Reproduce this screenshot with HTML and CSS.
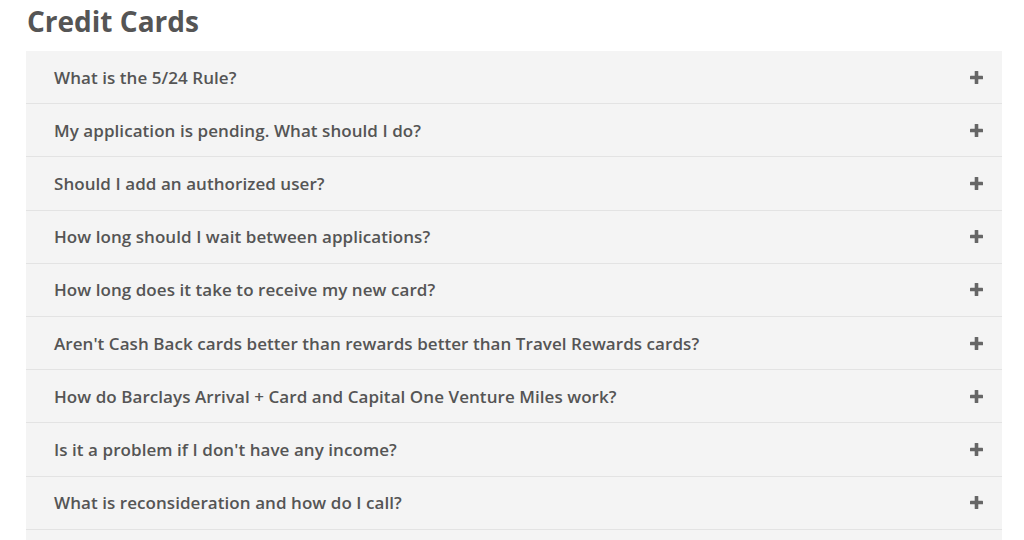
FILE: index.html
```html
<!DOCTYPE html>
<html lang="en">
<head>
<meta charset="utf-8">
<title>Credit Cards FAQ</title>
<link rel="stylesheet" href="styles.css">
</head>
<body>
<main class="page">
  <h1 class="title">Credit Cards</h1>
  <div class="faq">
    <div class="item"><span class="q">What is the 5/24 Rule?</span><svg class="plus" viewBox="0 0 13 13"><rect x="4.7" y="0" width="3.6" height="13" rx="0.6"/><rect x="0" y="4.7" width="13" height="3.6" rx="0.6"/></svg></div>
    <div class="item"><span class="q">My application is pending. What should I do?</span><svg class="plus" viewBox="0 0 13 13"><rect x="4.7" y="0" width="3.6" height="13" rx="0.6"/><rect x="0" y="4.7" width="13" height="3.6" rx="0.6"/></svg></div>
    <div class="item"><span class="q">Should I add an authorized user?</span><svg class="plus" viewBox="0 0 13 13"><rect x="4.7" y="0" width="3.6" height="13" rx="0.6"/><rect x="0" y="4.7" width="13" height="3.6" rx="0.6"/></svg></div>
    <div class="item"><span class="q">How long should I wait between applications?</span><svg class="plus" viewBox="0 0 13 13"><rect x="4.7" y="0" width="3.6" height="13" rx="0.6"/><rect x="0" y="4.7" width="13" height="3.6" rx="0.6"/></svg></div>
    <div class="item"><span class="q">How long does it take to receive my new card?</span><svg class="plus" viewBox="0 0 13 13"><rect x="4.7" y="0" width="3.6" height="13" rx="0.6"/><rect x="0" y="4.7" width="13" height="3.6" rx="0.6"/></svg></div>
    <div class="item"><span class="q">Aren't Cash Back cards better than rewards better than Travel Rewards cards?</span><svg class="plus" viewBox="0 0 13 13"><rect x="4.7" y="0" width="3.6" height="13" rx="0.6"/><rect x="0" y="4.7" width="13" height="3.6" rx="0.6"/></svg></div>
    <div class="item"><span class="q">How do Barclays Arrival + Card and Capital One Venture Miles work?</span><svg class="plus" viewBox="0 0 13 13"><rect x="4.7" y="0" width="3.6" height="13" rx="0.6"/><rect x="0" y="4.7" width="13" height="3.6" rx="0.6"/></svg></div>
    <div class="item"><span class="q">Is it a problem if I don't have any income?</span><svg class="plus" viewBox="0 0 13 13"><rect x="4.7" y="0" width="3.6" height="13" rx="0.6"/><rect x="0" y="4.7" width="13" height="3.6" rx="0.6"/></svg></div>
    <div class="item"><span class="q">What is reconsideration and how do I call?</span><svg class="plus" viewBox="0 0 13 13"><rect x="4.7" y="0" width="3.6" height="13" rx="0.6"/><rect x="0" y="4.7" width="13" height="3.6" rx="0.6"/></svg></div>
    <div class="item item-partial"></div>
  </div>
</main>
</body>
</html>
```

FILE: styles.css
```css
html, body {
  margin: 0;
  padding: 0;
  background: #ffffff;
}
body {
  font-family: "Open Sans", "Liberation Sans", sans-serif;
  color: #555555;
}
.page {
  width: 976px;
  padding-left: 26px;
}
.title {
  margin: 0;
  font-size: 28px;
  font-weight: 700;
  line-height: 42px;
  height: 51px;
  color: #555555;
  padding-left: 1px;
}
.faq {
  display: flex;
  flex-direction: column;
}
.item {
  display: flex;
  align-items: center;
  justify-content: space-between;
  height: 52.2px;
  padding: 0 19px 0 28px;
  background: #f4f4f4;
  border-bottom: 1px solid #e3e3e3;
}
.q {
  font-size: 17px;
  font-weight: 600;
  letter-spacing: 0.06px;
  color: #555555;
}
.plus {
  width: 13px;
  height: 13px;
  fill: #666666;
  flex: none;
}
```
